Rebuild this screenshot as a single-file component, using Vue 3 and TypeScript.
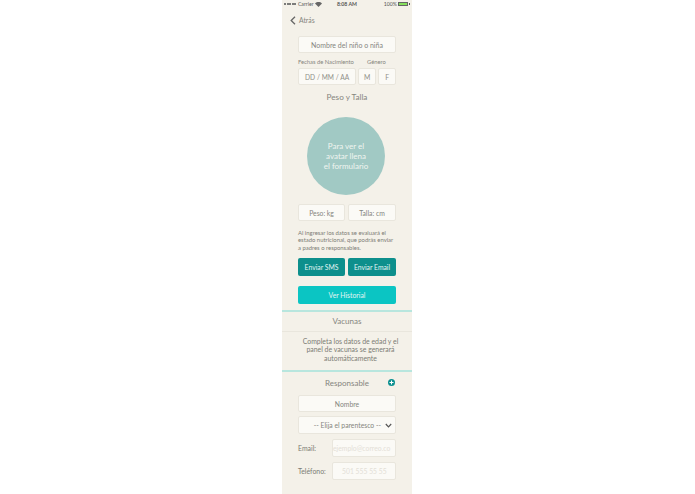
<script setup lang="ts">
const statusDots = [1, 2, 3, 4, 5]
</script>

<template>
  <div class="page">
    <main class="phone">
      <div class="status">
        <span class="carrier">
          <span class="dots"><i v-for="d in statusDots" :key="d"></i></span>
          Carrier
          <svg width="7" height="5" viewBox="0 0 7 5"><path d="M3.5 5 0 1.5C2 -.4 5 -.4 7 1.5Z" fill="#666" /></svg>
        </span>
        <span class="time">8:08 AM</span>
        <span class="battery">100%
          <span class="batt"></span><span class="nub"></span>
        </span>
      </div>
      <div class="nav">
        <svg width="6" height="9" viewBox="0 0 6 9"><path d="M5 .8 1.2 4.5 5 8.2" fill="none" stroke="#666" stroke-width="1.3" /></svg>
        <span>Atrás</span>
      </div>

      <section class="form">
        <div class="field name">Nombre del niño o niña</div>
        <div class="labels"><span class="l-date">Fechas de Nacimiento</span><span>Género</span></div>
        <div class="row birth">
          <div class="field date">DD / MM / AA</div>
          <div class="field g">M</div>
          <div class="field g">F</div>
        </div>
        <h2 class="title">Peso y Talla</h2>
        <div class="avatar">Para ver el<br />avatar llena<br />el formulario</div>
        <div class="row measures">
          <div class="field half">Peso: kg</div>
          <div class="field half">Talla: cm</div>
        </div>
        <p class="note">Al ingresar los datos se evaluará el<br />estado nutricional, que podrás enviar<br />a padres o responsables.</p>
        <div class="row sends">
          <button class="btn dark">Enviar SMS</button>
          <button class="btn dark">Enviar Email</button>
        </div>
        <button class="btn bright">Ver Historial</button>
      </section>

      <div class="vac-head">Vacunas</div>
      <p class="vac-text">Completa los datos de edad y el<br />panel de vacunas se generará<br />automáticamente</p>

      <section class="resp">
        <div class="resp-head">
          <span>Responsable</span>
          <svg class="plus" width="7" height="7" viewBox="0 0 7 7"><circle cx="3.5" cy="3.5" r="3.5" fill="#0a8f8f" /><path d="M3.5 1.5v4M1.5 3.5h4" stroke="#fff" stroke-width="1.1" /></svg>
        </div>
        <div class="field name nombre">Nombre</div>
        <div class="field select">
          <span>-- Elija el parentesco --</span>
          <svg width="7" height="5" viewBox="0 0 7 5"><path d="M.8 1 3.5 3.8 6.2 1" fill="none" stroke="#555" stroke-width="1.2" /></svg>
        </div>
        <div class="contact email"><label>Email:</label><div class="field ph">ejemplo@correo.co</div></div>
        <div class="contact phone-row"><label>Teléfono:</label><div class="field ph">501 555 55 55</div></div>
      </section>
    </main>
  </div>
</template>

<style>
html, body { margin: 0; background: #fff; }
</style>

<style scoped>
.page { width: 695px; height: 494px; overflow: hidden; background: #fff; display: flex; box-sizing: border-box; padding-left: 282px; }
.phone { width: 130px; height: 494px; background: #f4f1e9; font-family: "Lato", "Noto Sans", sans-serif; color: #85857e; font-size: 7.5px; flex: none; overflow: hidden; }
.status { height: 8px; display: flex; justify-content: space-between; align-items: center; padding: 0 2px; font-size: 5.2px; color: #555; position: relative; }
.carrier { display: flex; align-items: center; gap: 1.5px; }
.dots { display: flex; gap: .6px; }
.dots i { width: 2px; height: 2px; background: #555; border-radius: 50%; display: block; }
.time { position: absolute; left: 55px; font-weight: 700; }
.battery { display: flex; align-items: center; gap: 1px; }
.batt { width: 10px; height: 4px; background: #86e05c; border: .5px solid #666; box-sizing: border-box; }
.nub { width: 1px; height: 2px; background: #555; }
.nav { height: 16px; margin-top: 4px; display: flex; align-items: center; gap: 3px; padding-left: 8px; font-size: 6.8px; color: #85857e; }
.form { padding: 8px 16px 0; }
.field { background: #fbfaf6; border: 1px solid #e9e6dd; border-radius: 2px; box-sizing: border-box; display: flex; align-items: center; justify-content: center; white-space: nowrap; color: #85857e; }
.name { height: 17px; width: 98px; font-size: 7px; }
.labels { display: flex; font-size: 5.8px; margin-top: 5px; height: 8px; line-height: 8px; color: #85857e; }
.l-date { width: 69px; }
.row { display: flex; }
.birth { margin-top: 2px; gap: 2px; }
.date { width: 59px; height: 17px; font-size: 6.6px; letter-spacing: .05px; color: #8f8f88; }
.g { width: 18px; height: 17px; font-size: 6.8px; color: #8f8f88; }
.title { margin: 6px 0 0; text-align: center; font-weight: 400; font-size: 8.2px; line-height: 12px; color: #85857e; }
.avatar { width: 78px; height: 78px; margin: 14px 0 0 9px; border-radius: 50%; background: #a1c9c4; color: #f0f5f0; display: flex; align-items: center; justify-content: center; text-align: center; font-size: 8px; line-height: 10px; }
.measures { margin-top: 9px; gap: 3px; }
.half { width: 47px; height: 17px; font-size: 6.8px; }
.half + .half { width: 48px; }
.note { margin: 8px 0 0; height: 22px; font-size: 5.9px; line-height: 7.3px; color: #7c7c75; white-space: nowrap; }
.sends { margin-top: 7px; gap: 3px; }
.btn { border: 0; border-radius: 2px; color: #e3f5f3; font-family: inherit; font-size: 6.8px; padding: 0; display: flex; align-items: center; justify-content: center; }
.dark { width: 47px; height: 18px; background: #0d8f8c; }
.dark + .dark { width: 48px; }
.bright { width: 98px; height: 18px; background: #0bc5c3; margin-top: 10px; }
.vac-head { margin-top: 6px; height: 22px; box-sizing: border-box; border-top: 2px solid #b8e6de; border-bottom: 1px solid #e9e6dd; padding-bottom: 1px; display: flex; align-items: center; justify-content: center; font-size: 8px; color: #85857e; }
.vac-text { margin: 5px 12px 0 19px; text-align: center; font-size: 6.9px; line-height: 8.4px; color: #7c7c75; height: 28px; white-space: nowrap; }
.resp { border-top: 2px solid #b8e6de; padding: 0 16px; margin-top: 5px; }
.resp-head { position: relative; height: 23px; padding-bottom: 1px; box-sizing: border-box; display: flex; align-items: center; justify-content: center; font-size: 8px; color: #85857e; }
.plus { position: absolute; left: 90px; top: 7px; }
.nombre { font-size: 6.8px; }
.select { margin-top: 4px; height: 18px; width: 98px; font-size: 6.8px; gap: 4px; justify-content: flex-end; padding-right: 3px; }
.contact { display: flex; align-items: center; justify-content: space-between; }
.contact label { font-size: 6.9px; color: #7c7c75; }
.ph { width: 64px; height: 18px; color: #e3e0d7; font-size: 6.8px; justify-content: flex-start; padding-left: 0; overflow: hidden; }
.email { margin-top: 5px; }
.phone-row { margin-top: 5px; }
.phone-row .ph { padding-left: 9px; }
</style>
